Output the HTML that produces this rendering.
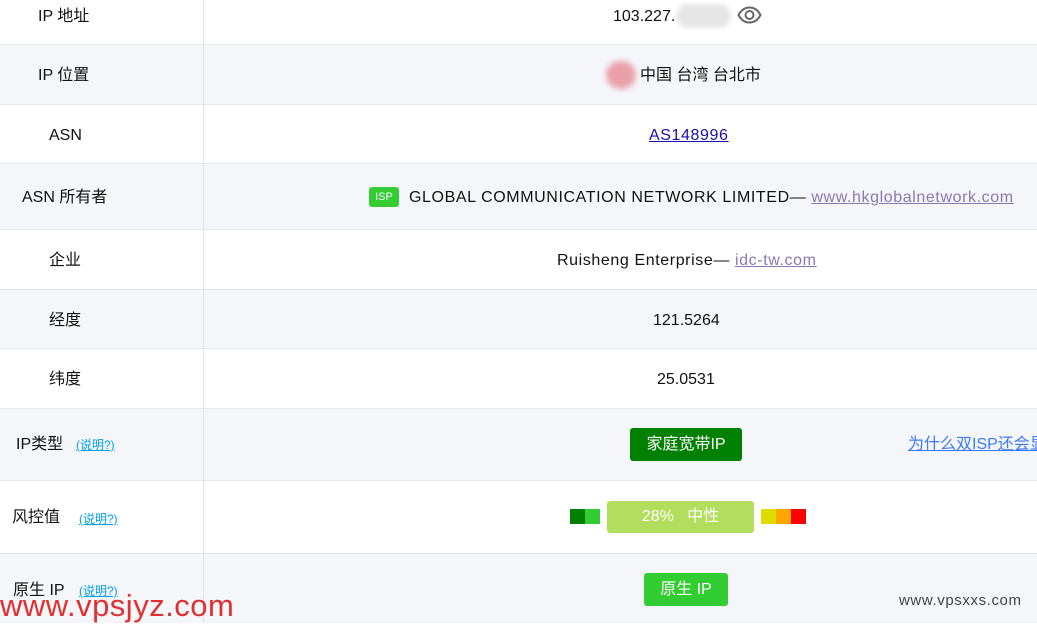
<!DOCTYPE html>
<html><head><meta charset="utf-8"><style>
*{margin:0;padding:0;box-sizing:border-box}
body{width:1037px;height:623px;overflow:hidden;background:#fff;font-family:"Liberation Sans","Noto Sans CJK SC",sans-serif;font-size:16px;color:#111;position:relative}
.row{position:absolute;left:0;width:1037px;border-bottom:1px solid #e6e7eb}
.g{background:#f5f6fa}
.vl{position:absolute;left:203px;top:0;width:1px;height:623px;background:#e2e3e8}
.t{position:absolute;white-space:nowrap;line-height:20px}
.hl{color:#00a0e9;font-size:12px;text-decoration:underline}
.v{color:#8a78b0;text-decoration:underline}
.btn{position:absolute;color:#fff;border-radius:3px;text-align:center}
.ls{letter-spacing:0.6px}
</style></head><body>
<div class="row" style="top:0;height:45px"></div>
<div class="row g" style="top:45px;height:60px"></div>
<div class="row" style="top:105px;height:59px"></div>
<div class="row g" style="top:164px;height:66px"></div>
<div class="row" style="top:230px;height:60px"></div>
<div class="row g" style="top:290px;height:59px"></div>
<div class="row" style="top:349px;height:60px"></div>
<div class="row g" style="top:409px;height:72px"></div>
<div class="row" style="top:481px;height:73px"></div>
<div class="row g" style="top:554px;height:69px;border:none"></div>
<div class="vl"></div>

<div class="t" style="left:38px;top:7px">IP 地址</div>
<div class="t" style="left:38px;top:66px">IP 位置</div>
<div class="t" style="left:49px;top:126px">ASN</div>
<div class="t" style="left:22px;top:188px">ASN 所有者</div>
<div class="t" style="left:49px;top:251px">企业</div>
<div class="t" style="left:49px;top:311px">经度</div>
<div class="t" style="left:49px;top:370px">纬度</div>
<div class="t" style="left:16px;top:435px">IP类型</div>
<div class="t hl" style="left:76px;top:435px">(说明?)</div>
<div class="t" style="left:12px;top:508px">风控值</div>
<div class="t hl" style="left:79px;top:509px">(说明?)</div>
<div class="t" style="left:13px;top:581px">原生 IP</div>
<div class="t hl" style="left:79px;top:581px">(说明?)</div>

<div class="t" style="left:613px;top:7px">103.227.</div>
<div style="position:absolute;left:676px;top:4px;width:55px;height:24px;border-radius:12px;background:#e6e6e6;filter:blur(2px)"></div>
<svg style="position:absolute;left:737px;top:4px" width="25" height="22" viewBox="0 0 25 22"><path d="M1.5 11C5 4.5 9 3.5 12.5 3.5s7.5 1 11 7.5c-3.5 6.5-7.5 7.5-11 7.5s-7.5-1-11-7.5z" fill="none" stroke="#666" stroke-width="2"/><circle cx="12.5" cy="11" r="4" fill="none" stroke="#666" stroke-width="2"/></svg>
<div style="position:absolute;left:606px;top:61px;width:30px;height:28px;border-radius:14px;background:#e9a0aa;filter:blur(3px)"></div>
<div class="t" style="left:640px;top:66px">中国 台湾 台北市</div>
<div class="t ls" style="left:649px;top:126px;color:#1a0dab;text-decoration:underline">AS148996</div>
<div class="btn" style="left:369px;top:187px;width:30px;height:20px;background:#32cd32;font-size:11px;line-height:20px">ISP</div>
<div class="t ls" style="left:409px;top:188px">GLOBAL COMMUNICATION NETWORK LIMITED— <span class="v">www.hkglobalnetwork.com</span></div>
<div class="t ls" style="left:557px;top:251px">Ruisheng Enterprise— <span class="v">idc-tw.com</span></div>
<div class="t" style="left:653px;top:311px">121.5264</div>
<div class="t" style="left:657px;top:370px">25.0531</div>
<div class="btn" style="left:630px;top:428px;width:112px;height:33px;background:#008000;line-height:33px">家庭宽带IP</div>
<div class="t" style="left:908px;top:435px;color:#3a7afe;text-decoration:underline">为什么双ISP还会显示</div>
<div style="position:absolute;left:570px;top:509px;width:15px;height:15px;background:#008000"></div>
<div style="position:absolute;left:585px;top:509px;width:15px;height:15px;background:#32cd32"></div>
<div class="btn" style="left:607px;top:501px;width:147px;height:32px;background:#b3dd5c;line-height:32px">28% &nbsp; 中性</div>
<div style="position:absolute;left:761px;top:509px;width:15px;height:15px;background:#dddd00"></div>
<div style="position:absolute;left:776px;top:509px;width:15px;height:15px;background:#ffa500"></div>
<div style="position:absolute;left:791px;top:509px;width:15px;height:15px;background:#ff0000"></div>
<div class="btn" style="left:644px;top:573px;width:84px;height:33px;background:#32cd32;line-height:33px">原生 IP</div>
<div class="t" style="left:899px;top:591px;color:#444;font-size:15px;letter-spacing:0.6px">www.vpsxxs.com</div>
<div class="t" style="left:0;top:588px;color:#e03030;font-size:31px;line-height:36px;letter-spacing:0.5px">www.vpsjyz.com</div>
</body></html>
